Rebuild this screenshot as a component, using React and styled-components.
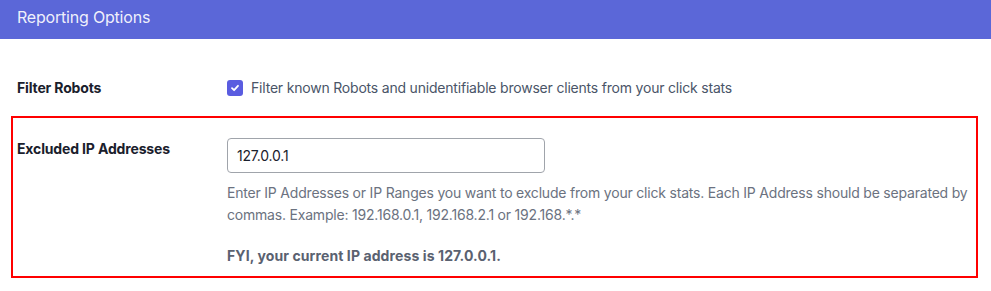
import React from "react";
import styled, { createGlobalStyle } from "styled-components";

const Global = createGlobalStyle`
  html, body { margin: 0; padding: 0; background: #ffffff; }
  body { font-family: Inter, "Open Sans", "Liberation Sans", sans-serif; }
`;

const Page = styled.div`
  width: 991px;
  height: 291px;
  background: #fff;
  overflow: hidden;
`;

const Header = styled.div`
  height: 39px;
  background: #5b67d8;
  display: flex;
  align-items: center;
  padding: 0 0 6px 17px;
  box-sizing: border-box;
  color: rgba(255, 255, 255, 0.92);
  font-size: 16px;
  font-weight: 400;
  letter-spacing: -0.2px;
`;

const Rows = styled.div`
  display: flex;
  flex-direction: column;
  padding-top: 39px;
`;

const Row = styled.div`
  display: grid;
  grid-template-columns: 210px 1fr;
  align-items: ${(p) => (p.$center ? "center" : "start")};
  margin: ${(p) => (p.$highlight ? "18px 0 0 11px" : "0")};
  width: ${(p) => (p.$highlight ? "967px" : "auto")};
  box-sizing: border-box;
  border: ${(p) => (p.$highlight ? "2px solid #ff0000" : "none")};
  padding: ${(p) => (p.$highlight ? "20px 0 9px 4px" : "0 0 0 17px")};
`;

const Label = styled.div`
  font-size: 14px;
  font-weight: 700;
  color: #1a202c;
  line-height: 20px;
  letter-spacing: -0.15px;
  margin-top: ${(p) => p.$top || "0"};
`;

const CheckLine = styled.label`
  display: flex;
  align-items: center;
  gap: 8px;
  font-size: 14px;
  line-height: 20px;
  color: #4a5568;
  letter-spacing: -0.2px;
`;

const Box = styled.span`
  flex: none;
  width: 16px;
  height: 16px;
  border-radius: 3px;
  background: #5a5ce0;
  display: inline-flex;
  align-items: center;
  justify-content: center;
`;

const Field = styled.div`
  display: flex;
  flex-direction: column;
`;

const Input = styled.input`
  width: 318px;
  height: 35px;
  box-sizing: border-box;
  border: 1px solid #a0a4ab;
  border-radius: 4px;
  padding: 0 9px;
  font-family: inherit;
  font-size: 14px;
  letter-spacing: -0.2px;
  color: #1a202c;
  outline: none;
`;

const Help = styled.p`
  margin: 9px 0 0;
  font-size: 14px;
  line-height: 22px;
  letter-spacing: -0.2px;
  color: #6b7280;
`;

const Fyi = styled.p`
  margin: 19px 0 0;
  font-size: 14px;
  line-height: 22px;
  font-weight: 700;
  letter-spacing: 0.1px;
  color: #5a6170;
`;

export default function App() {
  return (
    <Page>
      <Global />
      <Header>Reporting Options</Header>
      <Rows>
        <Row $center>
          <Label>Filter Robots</Label>
          <CheckLine>
            <Box>
              <svg width="10" height="10" viewBox="0 0 10 10">
                <path d="M2 5.2 L4.1 7.2 L8 2.8" fill="none" stroke="#fff" strokeWidth="1.8" strokeLinecap="round" strokeLinejoin="round" />
              </svg>
            </Box>
            Filter known Robots and unidentifiable browser clients from your click stats
          </CheckLine>
        </Row>
        <Row $highlight>
          <Label $top="1px">Excluded IP Addresses</Label>
          <Field>
            <Input defaultValue="127.0.0.1" />
            <Help>
              Enter IP Addresses or IP Ranges you want to exclude from your click stats. Each IP Address should be separated by commas. Example: 192.168.0.1, 192.168.2.1 or 192.168.*.*
            </Help>
            <Fyi>FYI, your current IP address is 127.0.0.1.</Fyi>
          </Field>
        </Row>
      </Rows>
    </Page>
  );
}
